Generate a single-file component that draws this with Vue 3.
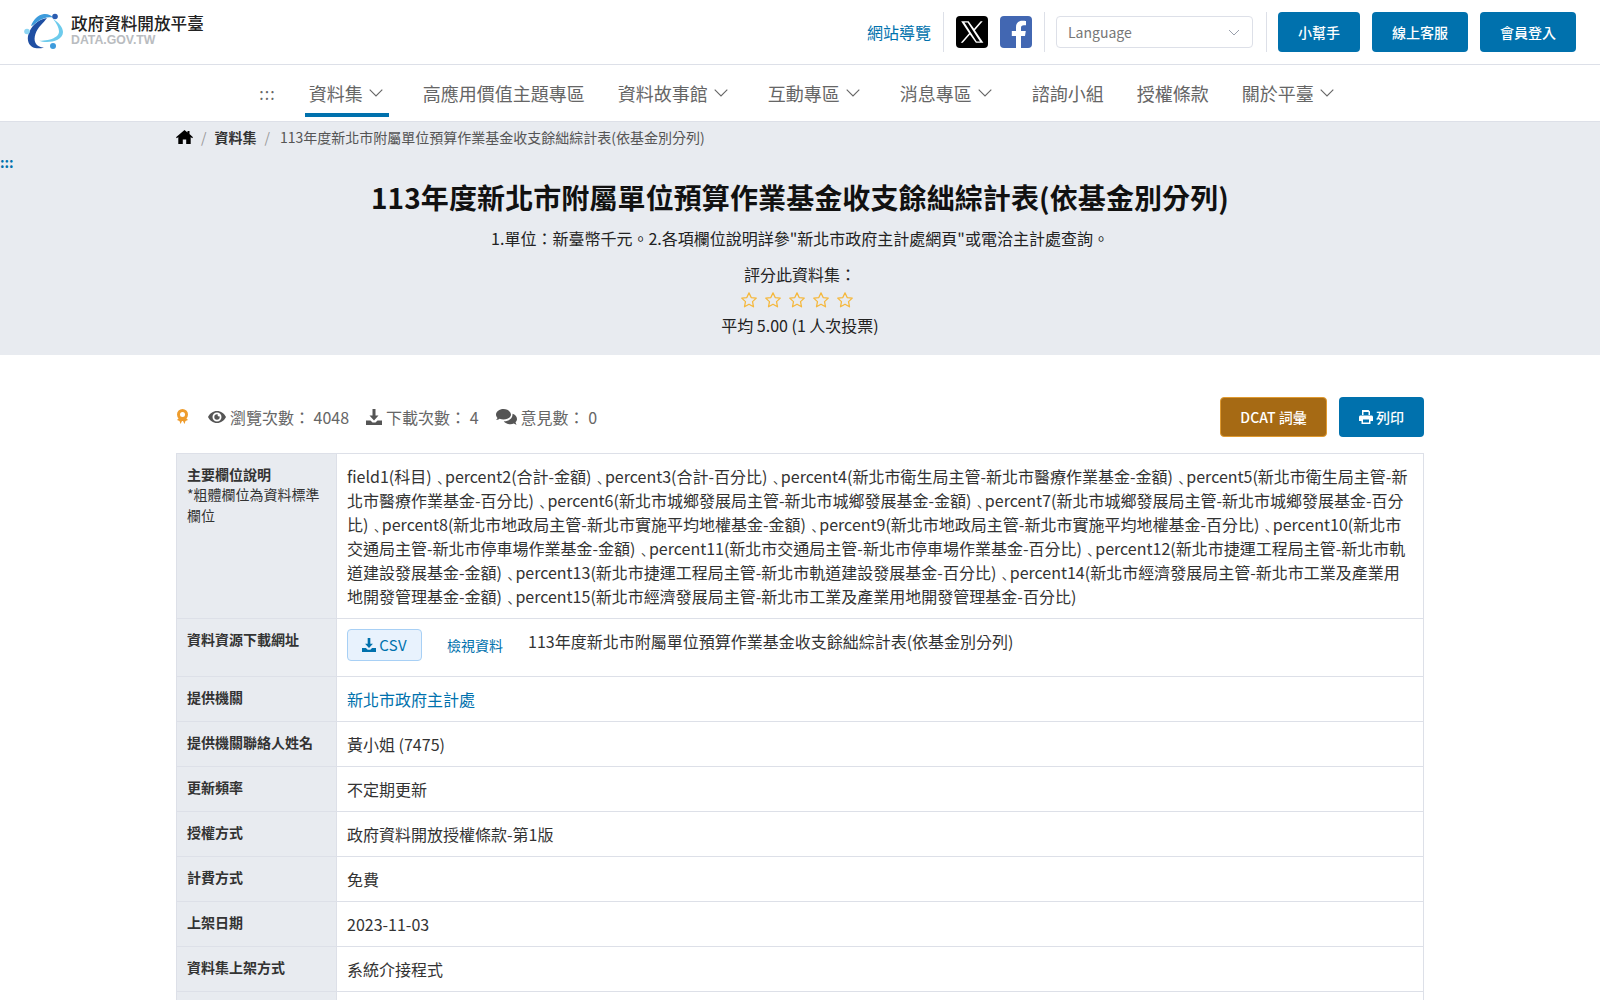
<template>
  <div class="page">
    <header class="topbar">
      <a class="logo" href="#">
        <svg class="logo-mark" width="40" height="37" viewBox="0 0 40 37">
          <path d="M23 5C14 6 6 14 4 23c-1 6 2 11 7 12 3 .6 6 .4 9-.6-4 0-7-1.400-8.500-4.400-2.500-5 .5-13 5.500-18 2-2 4-4.500 6-7z" fill="#1f4fa3" />
          <path d="M7 13C9 7 14 1.500 20 1c4-.3 7 1 9 3.500C24 3.500 18 5 13 9c-2 1.500-4 3.500-6 4z" fill="#3d9bdc" />
          <path d="M29 6c5 3 10 8 10 13 0 7-9 10-16 10-3 0-6-.5-8-1.500 3 .5 7 0 11-1 5-1.500 9-4 9-8 0-4-3-9-6-12.500z" fill="#6dcbec" />
          <circle cx="31" cy="3.500" r="2.800" fill="#2a5cb0" />
          <circle cx="3" cy="18.500" r="2.800" fill="#8dd5f3" />
          <circle cx="29" cy="33" r="3" fill="#3d9bdc" />
        </svg>
        <span class="logo-text">
          <span class="logo-name">政府資料開放平臺</span>
          <span class="logo-url">DATA.GOV.TW</span>
        </span>
      </a>
      <div class="top-actions">
        <a class="sitemap" href="#">網站導覽</a>
        <span class="divider"></span>
        <a class="social x" href="#">
          <svg width="26" height="26" viewBox="0 0 24 24"><path d="M2 2h6.900l5 7.100L20 2h1.900l-7.200 8.300L22.500 22h-6.900l-5.500-7.700L3.500 22H1.600l7.700-8.900zM5 3.300l11.300 17.400h3.100L8 3.300z" fill="#fff" /></svg>
        </a>
        <a class="social fb" href="#">
          <svg width="32" height="32" viewBox="0 0 32 32"><path d="M21 32V20h4l.8-5H21v-3c0-1.600.7-2.700 2.900-2.700H26V5c-.8-.1-2.200-.3-3.700-.3-3.900 0-6.300 2.300-6.300 6.700V15h-4.200v5H16v12z" fill="#fff" /></svg>
        </a>
        <span class="divider"></span>
        <div class="lang">
          <span>Language</span>
          <svg width="12" height="7" viewBox="0 0 12 7"><path d="M1 1l5 5 5-5" fill="none" stroke="#9aa0ac" stroke-width="1" /></svg>
        </div>
        <span class="divider"></span>
        <button class="top-btn">小幫手</button>
        <button class="top-btn">線上客服</button>
        <button class="top-btn">會員登入</button>
      </div>
    </header>

    <nav class="mainnav">
      <span class="nav-dots">:::</span>
      <a v-for="item in navItems" :key="item.label" class="nav-item" :class="{ active: item.active, 'has-menu': item.menu }" href="#">
        {{ item.label }}
        <svg v-if="item.menu" width="14" height="8" viewBox="0 0 14 8"><path d="M.7.700L7 7l6.300-6.300" fill="none" stroke="#666" stroke-width="1.100" /></svg>
      </a>
    </nav>

    <section class="hero">
      <div class="crumbs">
        <svg width="17" height="14" viewBox="0 0 17 14"><path d="M8.500 0L0 7.200l.9 1 1.400-1.200V14h4.500V9.500h3.400V14h4.500V7l1.400 1.200.9-1L13.500 4.100V1h-2v1.400z" fill="#000" /></svg>
        <span class="sep">/</span>
        <a class="crumb-link" href="#">資料集</a>
        <span class="sep">/</span>
        <span class="crumb-current">{{ title }}</span>
      </div>
      <div class="anchor">:::</div>
      <h1>{{ title }}</h1>
      <p class="desc">1.單位：新臺幣千元。2.各項欄位說明詳參"新北市政府主計處網頁"或電洽主計處查詢。</p>
      <p class="rate-label">評分此資料集：</p>
      <div class="stars">
        <svg v-for="n in 5" :key="n" width="18" height="18" viewBox="0 0 24 24"><path d="M12 2.500l2.900 6.200 6.800.8-5 4.700 1.300 6.800-6-3.400-6 3.400 1.300-6.800-5-4.700 6.800-.8z" fill="none" stroke="#f5b83d" stroke-width="1.700" stroke-linejoin="round" /></svg>
      </div>
      <p class="rate-avg">平均 5.00 (1 人次投票)</p>
    </section>

    <main class="content">
      <div class="stats">
        <svg class="award" width="13" height="16" viewBox="0 0 13 16">
          <circle cx="6.500" cy="5.500" r="4" fill="none" stroke="#ee9c2d" stroke-width="3" />
          <path d="M1 11l2.500 1 1 3 1.500-3h1l1.500 3 1-3L12 11l-2-2H3z" fill="#ee9c2d" />
        </svg>
        <span class="stat first">
          <svg width="18" height="14" viewBox="0 0 18 14"><path d="M9 1C5 1 1.800 3.500 0 7c1.800 3.500 5 6 9 6s7.200-2.500 9-6c-1.800-3.500-5-6-9-6zm0 10.500A4.500 4.500 0 1 1 9 2.500a4.500 4.500 0 0 1 0 9zM9 4.300a2.700 2.700 0 1 0 2.700 2.700c0-.3 0-.6-.1-.8a1.300 1.300 0 0 1-1.800-1.800c-.2-.1-.5-.1-.8-.1z" fill="#555" /></svg>
          瀏覽次數： 4048
        </span>
        <span class="stat">
          <svg width="16" height="16" viewBox="0 0 16 16"><path d="M6.500 0h3v6.500h3L8 11.500 3.500 6.500h3zM0 11.500h4.500L6.500 13.500h3l2-2H16V16H0z" fill="#555" /></svg>
          下載次數： 4
        </span>
        <span class="stat">
          <svg width="21" height="16" viewBox="0 0 21 16"><path d="M7.500 0C3.400 0 0 2.500 0 5.600c0 1.300.6 2.400 1.500 3.400C1 10 .1 11 .1 11s2 0 3.500-1.200c1.200.5 2.500.8 3.900.8 4.100 0 7.500-2.300 7.500-5S11.600 0 7.500 0z" fill="#555" /><path d="M19.500 13.200c.9-1 1.500-2.100 1.500-3.300 0-2.300-1.900-4.300-4.500-5.100v1c0 3.700-3.900 6.600-8.700 6.400 1.200 1.800 3.700 3 6.700 3 1.200 0 2.300-.2 3.300-.6 1.300 1 3 1.200 3 1.200s-.9-1-1.300-2.600z" fill="#555" /></svg>
          意見數： 0
        </span>
        <div class="stat-btns">
          <button class="btn dcat">DCAT 詞彙</button>
          <button class="btn print">
            <svg width="14" height="14" viewBox="0 0 14 14"><path d="M3 0h6.500L11 1.500V5H9.500V2H4.500v3H3zM1.500 5.500h11c.8 0 1.500.7 1.500 1.500v4h-2.500v3h-9v-3H0V7c0-.8.7-1.500 1.500-1.500zM4 9.500V12.500h6V9.500z" fill="#fff" /></svg>
            列印
          </button>
        </div>
      </div>

      <table class="info">
        <tbody>
          <tr>
            <th>主要欄位說明<small>*粗體欄位為資料標準欄位</small></th>
            <td><template v-for="(part, i) in fields" :key="i">{{ part }}<span v-if="i < fields.length - 1" class="comma">﹑</span></template></td>
          </tr>
          <tr>
            <th>資料資源下載網址</th>
            <td>
              <div class="download">
                <a class="csv" href="#">
                  <svg width="14" height="14" viewBox="0 0 16 16"><path d="M6.500 0h3v6.500h3L8 11.500 3.500 6.500h3zM0 11.500h4.500L6.500 13.500h3l2-2H16V16H0z" fill="#0071ad" /></svg>
                  CSV
                </a>
                <a class="view" href="#">檢視資料</a>
                <span class="res-name">{{ title }}</span>
              </div>
            </td>
          </tr>
          <tr>
            <th>提供機關</th>
            <td><a class="link" href="#">新北市政府主計處</a></td>
          </tr>
          <tr v-for="row in rows" :key="row.label">
            <th>{{ row.label }}</th>
            <td>{{ row.value }}</td>
          </tr>
        </tbody>
      </table>
    </main>
  </div>
</template>

<script setup>
const title = '113年度新北市附屬單位預算作業基金收支餘絀綜計表(依基金別分列)'

const navItems = [
  { label: '資料集', menu: true, active: true },
  { label: '高應用價值主題專區' },
  { label: '資料故事館', menu: true },
  { label: '互動專區', menu: true },
  { label: '消息專區', menu: true },
  { label: '諮詢小組' },
  { label: '授權條款' },
  { label: '關於平臺', menu: true },
]

const fields = [
  'field1(科目)',
  'percent2(合計-金額)',
  'percent3(合計-百分比)',
  'percent4(新北市衛生局主管-新北市醫療作業基金-金額)',
  'percent5(新北市衛生局主管-新北市醫療作業基金-百分比)',
  'percent6(新北市城鄉發展局主管-新北市城鄉發展基金-金額)',
  'percent7(新北市城鄉發展局主管-新北市城鄉發展基金-百分比)',
  'percent8(新北市地政局主管-新北市實施平均地權基金-金額)',
  'percent9(新北市地政局主管-新北市實施平均地權基金-百分比)',
  'percent10(新北市交通局主管-新北市停車場作業基金-金額)',
  'percent11(新北市交通局主管-新北市停車場作業基金-百分比)',
  'percent12(新北市捷運工程局主管-新北市軌道建設發展基金-金額)',
  'percent13(新北市捷運工程局主管-新北市軌道建設發展基金-百分比)',
  'percent14(新北市經濟發展局主管-新北市工業及產業用地開發管理基金-金額)',
  'percent15(新北市經濟發展局主管-新北市工業及產業用地開發管理基金-百分比)',
]

const rows = [
  { label: '提供機關聯絡人姓名', value: '黃小姐 (7475)' },
  { label: '更新頻率', value: '不定期更新' },
  { label: '授權方式', value: '政府資料開放授權條款-第1版' },
  { label: '計費方式', value: '免費' },
  { label: '上架日期', value: '2023-11-03' },
  { label: '資料集上架方式', value: '系統介接程式' },
  { label: '', value: '' },
]
</script>

<style>
body {
  margin: 0;
  background: #fff;
  overflow: hidden;
}
</style>

<style scoped>
.page {
  font-family: "Noto Sans CJK TC", "Noto Sans", sans-serif;
  font-size: 16px;
  line-height: 24px;
  color: #333;
}

a {
  text-decoration: none;
  color: inherit;
}

.topbar {
  height: 64px;
  padding: 0 24px;
  display: flex;
  justify-content: space-between;
  align-items: center;
  border-bottom: 1px solid #dde0e8;
}

.logo {
  display: flex;
  align-items: center;
  margin-bottom: 1px;
}

.logo-text {
  display: flex;
  flex-direction: column;
  margin: 0 0 4px 7px;
}

.logo-name {
  font-size: 16.600px;
  line-height: 20px;
  font-weight: 500;
  color: #222;
}

.logo-url {
  font-family: "Liberation Sans", sans-serif;
  font-size: 12.300px;
  line-height: 14px;
  font-weight: 700;
  color: #b9bcc0;
}

.top-actions {
  display: flex;
  align-items: center;
}

.sitemap {
  color: #0071ad;
  margin-right: 12px;
}

.divider {
  width: 1px;
  height: 40px;
  background: #dde0e8;
}

.social {
  width: 32px;
  height: 32px;
  border-radius: 4px;
  display: flex;
  align-items: center;
  justify-content: center;
}

.social.x {
  background: #000;
  margin: 0 12px;
}

.social.fb {
  background: #4267b2;
  margin-right: 12px;
  overflow: hidden;
}

.lang {
  width: 197px;
  height: 32px;
  margin: 0 13px 0 11px;
  box-sizing: border-box;
  padding: 0 12px 0 11px;
  border: 1px solid #dde0e8;
  border-radius: 4px;
  display: flex;
  align-items: center;
  justify-content: space-between;
  font-size: 14px;
  color: #777;
}

.top-btn {
  height: 40px;
  padding: 0 20px;
  margin-left: 12px;
  border: none;
  border-radius: 4px;
  background: #0071ad;
  color: #fff;
  font: inherit;
  font-size: 14px;
  font-weight: 500;
}

.top-btn:first-of-type {
  margin-left: 11px;
}

.mainnav {
  height: 56px;
  display: flex;
  justify-content: center;
  align-items: center;
  gap: 33px;
  border-bottom: 1px solid #dde0e8;
  font-size: 18px;
  color: #666;
}

.nav-dots {
  font-size: 16px;
  color: #666;
  letter-spacing: 1px;
}

.nav-item {
  position: relative;
  display: flex;
  align-items: center;
  gap: 6px;
  height: 56px;
}

.nav-item.has-menu {
  margin-right: 7px;
}

.nav-item.active::after {
  content: "";
  position: absolute;
  left: -4px;
  right: -6px;
  bottom: 4px;
  height: 4px;
  background: #0071ad;
}

.hero {
  background: #e8ebf0;
  height: 233px;
  text-align: center;
}

.crumbs {
  width: 1248px;
  margin: 0 auto;
  height: 30px;
  display: flex;
  align-items: center;
  gap: 8px;
  font-size: 14px;
  color: #555;
}

.crumb-link {
  font-weight: 700;
  color: #333;
}

.crumb-current {
  margin-left: 2px;
}

.sep {
  color: #999;
}

.anchor {
  text-align: left;
  color: #0071ad;
  font-size: 14px;
  font-weight: 700;
  line-height: 20px;
  height: 20px;
}

h1 {
  margin: 4px 0 0;
  font-size: 28px;
  line-height: 42px;
  font-weight: 700;
  letter-spacing: .1px;
  color: #111;
}

.desc {
  margin: 8px 0 0;
  color: #222;
}

.rate-label {
  margin: 12px 0 0;
  color: #222;
}

.stars {
  display: flex;
  justify-content: center;
  gap: 6px;
  height: 26px;
  margin-top: 1px;
  align-items: center;
  padding-right: 6px;
}

.rate-avg {
  margin: 0;
  color: #222;
}

.content {
  width: 1248px;
  margin: 0 auto;
}

.stats {
  display: flex;
  align-items: center;
  height: 40px;
  margin-top: 42px;
  color: #666;
}

.stat {
  display: flex;
  align-items: center;
  gap: 4px;
  margin-left: 17px;
}

.stat.first {
  margin-left: 19px;
}

.stat-btns {
  margin-left: auto;
  display: flex;
  gap: 12px;
}

.btn {
  height: 40px;
  border-radius: 4px;
  font: inherit;
  font-size: 14px;
  font-weight: 500;
  color: #fff;
  display: flex;
  align-items: center;
  justify-content: center;
  gap: 3px;
  box-sizing: border-box;
}

.btn.dcat {
  width: 107px;
  background: #a66a14;
  border: 1px solid #e09a30;
}

.btn.print {
  width: 85px;
  background: #0071ad;
  border: none;
}

.info {
  width: 100%;
  margin-top: 16px;
  border-collapse: collapse;
  table-layout: fixed;
  color: #333;
}

.info th,
.info td {
  border: 1px solid #dde0e8;
  vertical-align: top;
  text-align: left;
  padding: 10px;
}

.info th {
  width: 139px;
  background: #e8ebf0;
  font-size: 14px;
  line-height: 20px;
  font-weight: 700;
  border-right: none;
}

.info th small {
  display: block;
  font-size: 14px;
  line-height: 21px;
  font-weight: 400;
}

.comma {
  letter-spacing: -2.600px;
}

.download {
  display: flex;
  align-items: flex-start;
  height: 37px;
}

.csv {
  width: 75px;
  height: 32px;
  box-sizing: border-box;
  background: #e8f2fd;
  border: 1px solid #a8d0f5;
  border-radius: 4px;
  display: flex;
  align-items: center;
  justify-content: center;
  gap: 3px;
  color: #0071ad;
  font-size: 15px;
  letter-spacing: .3px;
}

.view {
  margin: 4px 25px 0 25px;
  color: #0071ad;
  font-size: 14px;
}

.res-name {
  font-size: 16px;
  line-height: 24px;
}

.link {
  color: #0071ad;
}
</style>
